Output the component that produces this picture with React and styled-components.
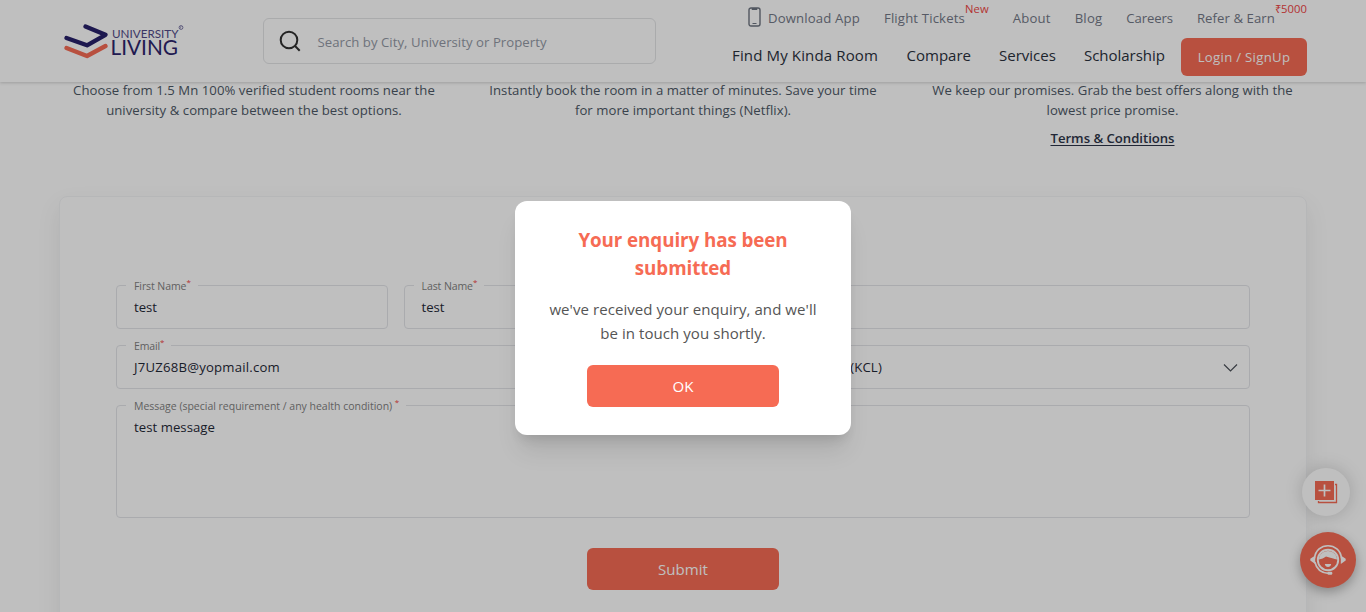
import React from "react";
import styled, { createGlobalStyle } from "styled-components";

const Global = createGlobalStyle`
  *, *::before, *::after { box-sizing: border-box; }
  body { margin: 0; background: #fff; font-family: "Open Sans", "Segoe UI", sans-serif; color: #374151; }
  button, input { font-family: inherit; }
`;

const Page = styled.div`
  position: relative;
  width: 1366px;
  height: 612px;
  overflow: hidden;
  background: #fff;
`;

const Header = styled.header`
  position: relative;
  z-index: 1;
  display: flex;
  height: 82px;
  padding: 0 59px 0 64px;
  background: #fff;
  box-shadow: 0 1px 3px rgba(0, 0, 0, 0.18);
`;

const Logo = styled.svg`
  width: 122px;
  height: 40px;
  margin-top: 22px;
  flex: none;
`;

const Search = styled.div`
  display: flex;
  align-items: center;
  width: 393px;
  height: 46px;
  margin: 18px 0 0 77px;
  padding-left: 15px;
  gap: 15px;
  border: 1px solid #e3e4e6;
  border-radius: 6px;
  color: #9399a5;
  font-size: 13.16px;
  letter-spacing: 0.041px;
  flex: none;
`;

const Placeholder = styled.span`
  padding: 2px 0 0 0.5px;
`;

const Navs = styled.div`
  display: flex;
  flex-direction: column;
  align-items: flex-end;
  margin-left: auto;
`;

const TopNav = styled.nav`
  display: flex;
  align-items: center;
  height: 36px;
  gap: 24px;
`;

const TopLink = styled.a`
  display: flex;
  align-items: center;
  white-space: nowrap;
  color: #737987;
  font-size: 13.16px;
  line-height: 20px;
  letter-spacing: ${(p) => p.$ls}px;
`;

const Tag = styled.span`
  color: #ef4444;
  font-size: 11.28px;
  line-height: 16px;
  letter-spacing: 0.06px;
  margin-top: -18px;
`;

const Phone = styled.svg`
  margin: -3px 7px 0 0;
`;

const MainNav = styled.nav`
  display: flex;
  align-items: flex-start;
  padding-top: 2px;
`;

const MainLink = styled.a`
  white-space: nowrap;
  margin-right: ${(p) => p.$gap}px;
  padding-top: 5px;
  color: #2a313d;
  font-size: 15.04px;
  line-height: 24px;
  letter-spacing: ${(p) => p.$ls}px;
`;

const Login = styled.button`
  width: 126px;
  height: 38px;
  padding: 0;
  border: 0;
  border-radius: 6px;
  background: #f66b54;
  color: #fff;
  font-size: 13.16px;
  font-weight: 500;
  letter-spacing: 0.31px;
`;

const Perks = styled.section`
  display: grid;
  grid-template-columns: repeat(3, 390px);
  column-gap: 39px;
  height: 116px;
  margin: -2px 0 0 59px;
`;

const Perk = styled.div`
  text-align: center;
  color: #4d5866;
  font-size: 13.16px;
  line-height: 20px;
  letter-spacing: 0.045px;
  white-space: pre-line;
  &:last-child { padding-left: 1px; }
`;

const Terms = styled.a`
  display: block;
  margin-top: 8px;
  color: #2d3448;
  font-weight: 600;
  letter-spacing: -0.025px;
  text-decoration: underline;
  text-decoration-thickness: 1px;
  text-underline-offset: 2px;
`;

const Card = styled.div`
  width: 1248px;
  height: 520px;
  margin-left: 59px;
  padding: 88px 56px 0;
  border: 1px solid #f3f4f6;
  border-radius: 8px;
  box-shadow: 0 10px 25px rgba(0, 0, 0, 0.08);
`;

const Fields = styled.div`
  display: grid;
  grid-template-columns: repeat(4, 1fr);
  grid-template-rows: 44px 44px 113px;
  gap: 16px;
  height: 233px;
`;

const Field = styled.div`
  position: relative;
  display: flex;
  justify-content: space-between;
  grid-column: span ${(p) => p.$span};
  padding: 11px 11px 0 17px;
  border: 1px solid #e3e5e9;
  border-radius: 4px;
  color: #1f2937;
  font-size: 13.16px;
  line-height: 20px;
  letter-spacing: ${(p) => p.$ls || 0}px;
`;

const Label = styled.label`
  position: absolute;
  left: 9px;
  top: -9px;
  padding: 0 7px 0 8px;
  background: #fff;
  color: #7f7f7f;
  font-size: 10.5px;
  line-height: 18px;
  letter-spacing: ${(p) => p.$ls || 0}px;
  white-space: pre;
`;

const Star = styled.span`
  position: relative;
  top: -5px;
  color: #ef4444;
  font-size: 8px;
  line-height: 0;
`;

const Chevron = styled.svg`
  margin-top: 6px;
`;

const Button = styled.button`
  display: block;
  width: 192px;
  height: 42px;
  margin: ${(p) => p.$top}px auto 0;
  padding: 0;
  border: 0;
  border-radius: 6px;
  background: #f66b54;
  color: #fff;
  font-size: 15.04px;
  font-weight: ${(p) => p.$weight};
  letter-spacing: 0.05px;
`;

const Floating = styled.div`
  position: absolute;
  right: 10px;
  bottom: 24px;
  display: flex;
  flex-direction: column;
  align-items: center;
  gap: 16px;
`;

const Round = styled.div`
  display: flex;
  align-items: center;
  justify-content: center;
  width: ${(p) => p.$size}px;
  height: ${(p) => p.$size}px;
  margin-right: ${(p) => p.$shift || 0}px;
  border-radius: 50%;
  background: ${(p) => p.$bg};
  box-shadow: ${(p) => p.$shadow};
`;

const Overlay = styled.div`
  position: absolute;
  inset: 0;
  z-index: 2;
  display: flex;
  align-items: flex-start;
  justify-content: center;
  padding-top: 201px;
  background: rgba(0, 0, 0, 0.25);
`;

const Modal = styled.div`
  width: 336px;
  height: 234px;
  padding-top: 25px;
  border-radius: 12px;
  background: #fff;
  text-align: center;
  box-shadow: 0 20px 25px -5px rgba(0, 0, 0, 0.1), 0 8px 12px -5px rgba(0, 0, 0, 0.12);
`;

const Title = styled.h2`
  margin: 0;
  color: #f66b54;
  font-size: 18.8px;
  font-weight: 700;
  line-height: 28px;
  letter-spacing: -0.08px;
  white-space: pre-line;
`;

const Message = styled.p`
  margin: 15px 0 0;
  color: #555;
  font-size: 15.04px;
  line-height: 24px;
  letter-spacing: 0.055px;
  white-space: pre-line;
`;

const BrandLogo = () => (
  <Logo viewBox="0 0 122 40" fill="none">
    <path d="M21.500 4.500L41.500 12.800L23 23.300L2.500 16" stroke="#27206a" strokeWidth="4.300" strokeLinecap="round" strokeLinejoin="round" />
    <path d="M2.500 26L23 34L41.500 24" stroke="#f66b54" strokeWidth="4.300" strokeLinecap="round" strokeLinejoin="round" />
    <text x="48" y="15.700" fontFamily="Lato" fontSize="11.500" fontWeight="400" fill="#504a88" textLength="66.500" lengthAdjust="spacingAndGlyphs">UNIVERSITY</text>
    <text x="46.500" y="32.800" fontFamily="Lato" fontSize="20.500" fontWeight="400" fill="#2c256c" textLength="67.500" lengthAdjust="spacingAndGlyphs">LIVING</text>
    <circle cx="117" cy="5.500" r="1.900" stroke="#605a92" strokeWidth="0.800" />
    <path d="M116.500 6.500V4.700H117.500" stroke="#605a92" strokeWidth="0.500" />
  </Logo>
);

const SearchIcon = () => (
  <svg width="23" height="23" viewBox="0 0 23 23" fill="none" stroke="#303030" strokeWidth="2">
    <circle cx="10" cy="10" r="8.300" />
    <path d="M15.800 15.800L20.700 20.700" />
  </svg>
);

const PhoneIcon = () => (
  <Phone width="13" height="20" viewBox="0 0 13 20" fill="none" stroke="#6d7480">
    <rect x="1" y="1" width="11" height="18" rx="2" strokeWidth="1.400" />
    <path d="M4 1.500h5v1H4zM4.500 16.500h4" strokeWidth="1" />
  </Phone>
);

const AddIcon = () => (
  <svg width="24" height="24" viewBox="0 0 24 24" fill="none">
    <path d="M1 1h19v19H1z" fill="#f66b54" />
    <path d="M21 4.500h1.500v18h-18V21" stroke="#f66b54" strokeWidth="1.300" />
    <path d="M10.500 4.500v12M4.500 10.500h12" stroke="#fff" strokeWidth="1.700" />
  </svg>
);

const AgentIcon = () => (
  <svg width="36" height="32" viewBox="0 0 36 32" fill="none">
    <circle cx="18" cy="16" r="10.200" stroke="#fff" strokeWidth="1.900" />
    <path d="M9 15.500C9.500 4 26.500 4 27 15.500C24 14.700 21 14 16 12.500C14 14 11.500 15 9 15.500z" fill="#fff" />
    <path d="M14.800 20h6.400c-.4 4-6 4-6.400 0z" fill="#fff" />
    <path d="M4.500 14.500C6 -2.500 30 -2.500 31.500 14.500M4.800 18C6.500 25 11.500 29 18.500 29.300" stroke="#fff" strokeWidth="1.700" />
    <path d="M5.200 11.500v8.500L.3 16.500v-1.700zM30.800 11.500v8.500l4.900-3.500v-1.700z" fill="#fff" />
    <rect x="17.500" y="27.800" width="4.800" height="3" rx="1.300" fill="#fff" />
  </svg>
);

const topLinks = [
  { text: "About", ls: 0.19 },
  { text: "Blog", ls: 0.2 },
  { text: "Careers", ls: -0.12 },
];

const mainLinks = [
  { text: "Find My Kinda Room", ls: 0.124, gap: 28.5 },
  { text: "Compare", ls: -0.02, gap: 28 },
  { text: "Services", ls: 0.01, gap: 28 },
  { text: "Scholarship", ls: -0.03, gap: 16 },
];

export default function App() {
  return (
    <Page>
      <Global />
      <Header>
        <BrandLogo />
        <Search>
          <SearchIcon />
          <Placeholder>Search by City, University or Property</Placeholder>
        </Search>
        <Navs>
          <TopNav>
            <TopLink $ls={0.154}><PhoneIcon />Download App</TopLink>
            <TopLink $ls={0.151}>Flight Tickets<Tag>New</Tag></TopLink>
            {topLinks.map((l) => <TopLink key={l.text} $ls={l.ls}>{l.text}</TopLink>)}
            <TopLink $ls={0.068}>Refer &amp; Earn<Tag>₹5000</Tag></TopLink>
          </TopNav>
          <MainNav>
            {mainLinks.map((l) => <MainLink key={l.text} $ls={l.ls} $gap={l.gap}>{l.text}</MainLink>)}
            <Login>Login / SignUp</Login>
          </MainNav>
        </Navs>
      </Header>
      <Perks>
        <Perk>{"Choose from 1.5 Mn 100% verified student rooms near the\nuniversity & compare between the best options."}</Perk>
        <Perk>{"Instantly book the room in a matter of minutes. Save your time\nfor more important things (Netflix)."}</Perk>
        <Perk>
          {"We keep our promises. Grab the best offers along with the\nlowest price promise."}
          <Terms>Terms &amp; Conditions</Terms>
        </Perk>
      </Perks>
      <Card>
        <Fields>
          <Field $span={1}><Label $ls={-0.08}>First Name<Star>*</Star></Label>test</Field>
          <Field $span={1}><Label $ls={-0.08}>Last Name<Star>*</Star></Label>test</Field>
          <Field $span={2} />
          <Field $span={2} $ls={0.208}><Label $ls={-0.15}>Email<Star>*</Star></Label>J7UZ68B@yopmail.com</Field>
          <Field $span={2} $ls={0.16}>
            King's College London (KCL)
            <Chevron width="15" height="10" viewBox="0 0 15 10" fill="none" stroke="#4b5058" strokeWidth="1.200">
              <path d="M1 1.500L7.500 8L14 1.500" />
            </Chevron>
          </Field>
          <Field $span={4} $ls={0.05}>
            <Label $ls={-0.015}>Message (special requirement / any health condition) <Star>*</Star></Label>
            test message
          </Field>
        </Fields>
        <Button $top={30} $weight={400}>Submit</Button>
      </Card>
      <Floating>
        <Round $size={48} $shift={4} $bg="#fff" $shadow="0 0 18px rgba(0,0,0,0.18)"><AddIcon /></Round>
        <Round $size={56} $bg="#f66b54" $shadow="0 4px 12px rgba(0,0,0,0.3)"><AgentIcon /></Round>
      </Floating>
      <Overlay>
        <Modal>
          <Title>{"Your enquiry has been\nsubmitted"}</Title>
          <Message>{"we've received your enquiry, and we'll\nbe in touch you shortly."}</Message>
          <Button $top={20} $weight={500}>OK</Button>
        </Modal>
      </Overlay>
    </Page>
  );
}
